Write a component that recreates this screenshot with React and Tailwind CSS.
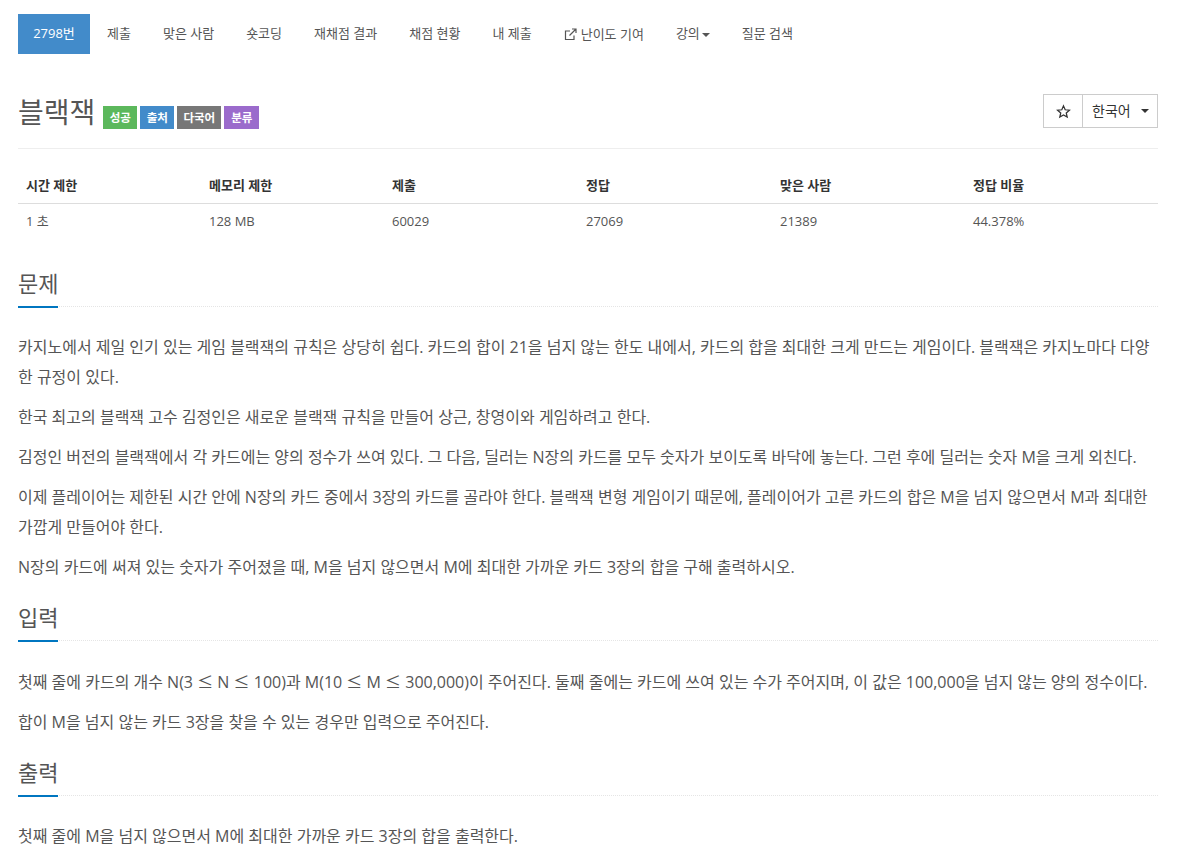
import React from "react";

const nav = ["제출", "맞은 사람", "숏코딩", "재채점 결과", "채점 현황", "내 제출"];
const headers = ["시간 제한", "메모리 제한", "제출", "정답", "맞은 사람", "정답 비율"];
const values = ["1 초", "128 MB", "60029", "27069", "21389", "44.378%"];
const widths = ["w-[183px]", "w-[183px]", "w-[194px]", "w-[194px]", "w-[193px]", "w-[193px]"];

function Heading({ children }) {
  return (
    <div className="relative mt-[19px] mb-[25px] h-[40px] border-b border-dotted border-[#e5e5e5]">
      <h2 className="text-[22px] leading-[32px] font-normal text-[#555]">{children}</h2>
      <span className="absolute left-0 bottom-[-2px] w-[40px] h-[2px] bg-[#0076c0]" />
    </div>
  );
}

function P({ children }) {
  return <p className="mb-[10px] text-[16px] leading-[30px] text-[#555]">{children}</p>;
}

function Le() {
  return <span className="font-['Noto_Sans_CJK_KR',sans-serif]">≤</span>;
}

function Label({ bg, w, children }) {
  return (
    <span className={`${bg} ${w} text-white text-[11.5px] font-bold leading-[23px] h-[23px] text-center inline-block`}>{children}</span>
  );
}

function Caret() {
  return <span className="inline-block w-0 h-0 ml-[2px] align-middle border-t-4 border-x-4 border-x-transparent border-t-[#555]" />;
}

export default function App() {
  return (
    <div className="bg-white h-[859px] overflow-hidden pl-[18px] pt-[14px] text-[13px] text-[#555] font-['Open_Sans','Noto_Sans_CJK_KR',sans-serif]">
      <div className="w-[1140px]">
        <nav className="flex h-[40px] text-[13px] leading-[39px] text-[#555]">
          <a className="bg-[#428bca] text-white w-[72px] text-center">2798번</a>
          {nav.map((n, i) => (
            <a key={n} className={i === 0 ? "pl-[17px] pr-[16px]" : "px-[16px]"}>{n}</a>
          ))}
          <a className="px-[16px] flex items-center gap-[4px]">
            <svg width="13" height="13" viewBox="0 0 13 13" fill="none" stroke="#555" strokeWidth="1.2">
              <path d="M10 7.5V11.5H1.5V3H6" />
              <path d="M5.5 7.5L11.5 1.5M8 1H12V5" />
            </svg>
            난이도 기여
          </a>
          <a className="px-[16px]">강의<Caret /></a>
          <a className="px-[16px]">질문 검색</a>
        </nav>

        <div className="mt-[40px] h-[55px] flex justify-between border-b border-[#eee]">
          <div className="flex items-start">
            <h1 className="text-[28px] leading-[36px] font-normal text-[#555]">블랙잭</h1>
            <div className="flex gap-[3px] ml-[8px] mt-[12px]">
              <Label bg="bg-[#5cb85c]" w="w-[34px]">성공</Label>
              <Label bg="bg-[#428bca]" w="w-[34px]">출처</Label>
              <Label bg="bg-[#777]" w="w-[44px]">다국어</Label>
              <Label bg="bg-[#9b6bcc]" w="w-[35px]">분류</Label>
            </div>
          </div>
          <div className="flex h-[34px] border border-[#ccc] text-[14px] text-[#333] leading-[32px]">
            <span className="w-[39px] flex items-center justify-center border-r border-[#ccc]">
              <svg width="15" height="15" viewBox="0 0 24 24" fill="none" stroke="#333" strokeWidth="2">
                <path d="M12 3l2.7 6.2 6.8.6-5.1 4.5 1.5 6.6L12 17.4l-5.9 3.5 1.5-6.6-5.1-4.5 6.8-.6z" />
              </svg>
            </span>
            <span className="w-[74px] pl-[9px] flex items-center">
              한국어
              <span className="inline-block w-0 h-0 ml-[10px] border-t-4 border-x-4 border-x-transparent border-t-[#333]" />
            </span>
          </div>
        </div>

        <table className="mt-[20px] w-[1140px] table-fixed border-collapse text-[13px] text-[#555]">
          <thead>
            <tr className="border-b border-[#ddd]">
              {headers.map((h, i) => (
                <th key={h} className={`${widths[i]} h-[34px] px-[8px] text-left font-bold text-[#333]`}>{h}</th>
              ))}
            </tr>
          </thead>
          <tbody>
            <tr>
              {values.map((v) => (
                <td key={v} className="h-[37px] px-[8px]">{v}</td>
              ))}
            </tr>
          </tbody>
        </table>

        <div className="mt-[27px]">
          <Heading>문제</Heading>
          <P>카지노에서 제일 인기 있는 게임 블랙잭의 규칙은 상당히 쉽다. 카드의 합이 21을 넘지 않는 한도 내에서, 카드의 합을 최대한 크게 만드는 게임이다. 블랙잭은 카지노마다 다양한 규정이 있다.</P>
          <P>한국 최고의 블랙잭 고수 김정인은 새로운 블랙잭 규칙을 만들어 상근, 창영이와 게임하려고 한다.</P>
          <P>김정인 버전의 블랙잭에서 각 카드에는 양의 정수가 쓰여 있다. 그 다음, 딜러는 N장의 카드를 모두 숫자가 보이도록 바닥에 놓는다. 그런 후에 딜러는 숫자 M을 크게 외친다.</P>
          <P>이제 플레이어는 제한된 시간 안에 N장의 카드 중에서 3장의 카드를 골라야 한다. 블랙잭 변형 게임이기 때문에, 플레이어가 고른 카드의 합은 M을 넘지 않으면서 M과 최대한 가깝게 만들어야 한다.</P>
          <P>N장의 카드에 써져 있는 숫자가 주어졌을 때, M을 넘지 않으면서 M에 최대한 가까운 카드 3장의 합을 구해 출력하시오.</P>
          <Heading>입력</Heading>
          <P>첫째 줄에 카드의 개수 N(3 <Le /> N <Le /> 100)과 M(10 <Le /> M <Le /> 300,000)이 주어진다. 둘째 줄에는 카드에 쓰여 있는 수가 주어지며, 이 값은 100,000을 넘지 않는 양의 정수이다.</P>
          <P>합이 M을 넘지 않는 카드 3장을 찾을 수 있는 경우만 입력으로 주어진다.</P>
          <Heading>출력</Heading>
          <P>첫째 줄에 M을 넘지 않으면서 M에 최대한 가까운 카드 3장의 합을 출력한다.</P>
        </div>
      </div>
    </div>
  );
}
